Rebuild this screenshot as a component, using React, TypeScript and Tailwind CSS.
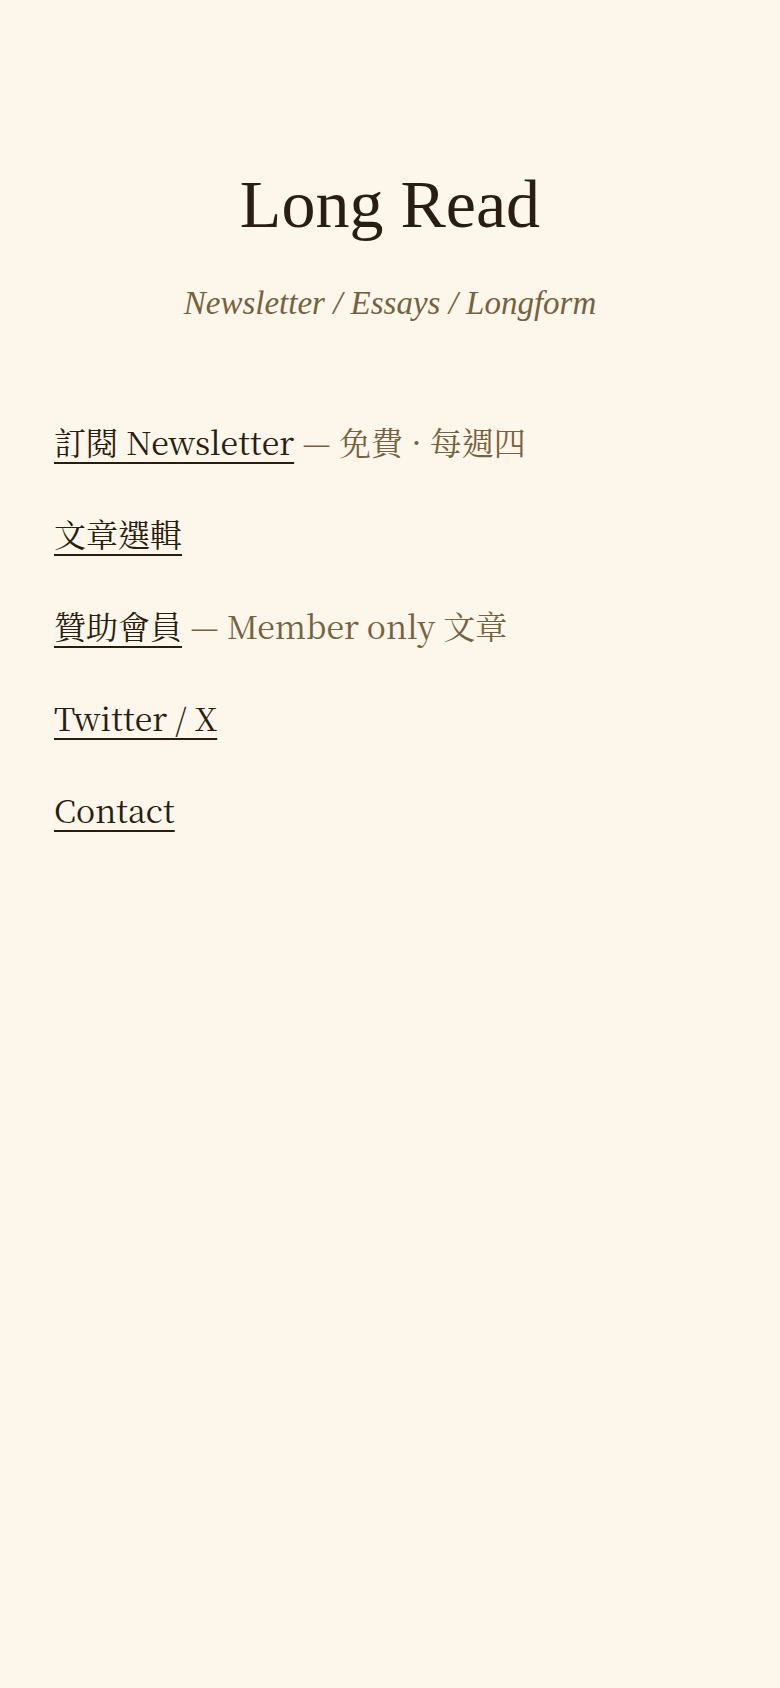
const links = [
  { label: "訂閱 Newsletter", note: "— 免費 · 每週四" },
  { label: "文章選輯" },
  { label: "贊助會員", note: "— Member only 文章" },
  { label: "Twitter / X" },
  { label: "Contact" },
];

const App = () => {
  return (
    <div className="min-h-screen w-full bg-[#fdf6ea] text-[#2a1d12]">
      <header className="pt-[164px] text-center">
        <h1 className="font-['Liberation_Serif',serif] text-[68px] leading-[1.2]">
          Long Read
        </h1>
        <p className="mt-[38px] font-['Liberation_Serif',serif] text-[33px] italic leading-[1.2] text-[#76623f]">
          Newsletter / Essays / Longform
        </p>
      </header>
      <ul className="mt-[95px] flex flex-col gap-[45.6px] px-[54px] font-['Noto_Serif_CJK_TC','Liberation_Serif','Noto_Sans_CJK_TC',serif] text-[32px] leading-[1.45]">
        {links.map((link) => (
          <li key={link.label}>
            <a
              href="#"
              className="underline decoration-2 underline-offset-[7px]"
            >
              {link.label}
            </a>
            {link.note && (
              <span className="text-[#76623f]"> {link.note}</span>
            )}
          </li>
        ))}
      </ul>
    </div>
  );
};

export default App;
